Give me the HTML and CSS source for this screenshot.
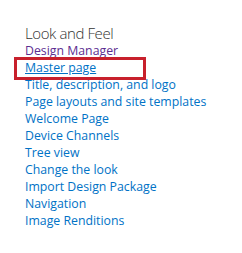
FILE: index.html
```html
<!DOCTYPE html>
<html lang="en">

<head>
    <meta charset="UTF-8">
    <title>Look and Feel</title>
    <link rel="stylesheet" href="styles.css">
</head>

<body>
    <div class="settings-group">
        <h3 class="group-title">Look and Feel</h3>
        <ul class="link-list">
            <li><a href="#" class="visited">Design Manager</a></li>
            <li class="highlight"><a href="#" class="current">Master page</a></li>
            <li><a href="#">Title, description, and logo</a></li>
            <li><a href="#">Page layouts and site templates</a></li>
            <li><a href="#">Welcome Page</a></li>
            <li><a href="#">Device Channels</a></li>
            <li><a href="#">Tree view</a></li>
            <li><a href="#">Change the look</a></li>
            <li><a href="#">Import Design Package</a></li>
            <li><a href="#">Navigation</a></li>
            <li><a href="#">Image Renditions</a></li>
        </ul>
    </div>
</body>

</html>
```

FILE: styles.css
```css
body {
    margin: 0;
    background: #fff;
    font-family: "Open Sans", "Noto Sans", sans-serif;
}

.settings-group {
    padding: 24px 0 0 25px;
}

.group-title {
    margin: 0;
    font-size: 15px;
    font-weight: 300;
    line-height: 18px;
    letter-spacing: -0.4px;
    color: #333;
}

.link-list {
    list-style: none;
    margin: 0;
    padding: 0;
}

.link-list li {
    font-size: 12.3px;
    line-height: 17px;
    position: relative;
}

.link-list a {
    color: #0072c6;
    text-decoration: none;
}

.link-list a.visited {
    color: #5c2d91;
}

.link-list a.current {
    text-decoration: underline;
}

/* red annotation frame */
.highlight::after {
    content: "";
    position: absolute;
    left: -11px;
    top: -2px;
    width: 126px;
    height: 17px;
    border: 3px solid #c8202c;
}
```
